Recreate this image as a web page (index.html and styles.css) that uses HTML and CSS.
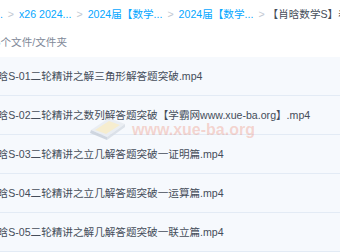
FILE: index.html
```html
<!DOCTYPE html>
<html lang="zh-CN">
<head>
  <meta charset="UTF-8">
  <title>文件列表</title>
  <link rel="stylesheet" href="styles.css">
</head>
<body>
  <div class="page">
    <div class="crumbs">
      <span class="crumb crumb-cut">...</span>
      <span class="sep">&gt;</span>
      <span class="crumb">x26 2024...</span>
      <span class="sep">&gt;</span>
      <span class="crumb">2024届【数学...</span>
      <span class="sep">&gt;</span>
      <span class="crumb">2024届【数学...</span>
      <span class="sep">&gt;</span>
      <span class="crumb crumb-now">【肖晗数学S】春季班</span>
    </div>

    <div class="count">共5个文件/文件夹</div>

    <div class="file-list">
      <div class="file-row"><span class="file-name">肖晗S-01二轮精讲之解三角形解答题突破.mp4</span></div>
      <div class="file-row"><span class="file-name">肖晗S-02二轮精讲之数列解答题突破【学霸网www.xue-ba.org】.mp4</span></div>
      <div class="file-row"><span class="file-name">肖晗S-03二轮精讲之立几解答题突破一证明篇.mp4</span></div>
      <div class="file-row"><span class="file-name">肖晗S-04二轮精讲之立几解答题突破一运算篇.mp4</span></div>
      <div class="file-row"><span class="file-name">肖晗S-05二轮精讲之解几解答题突破一联立篇.mp4</span></div>
    </div>

    <div class="watermark">
      <svg class="wm-logo" width="40" height="24" viewBox="0 0 40 24">
        <polygon points="4,14 22,2 38,8 20,21" fill="#e9edf2"/>
        <polygon points="4,14 20,21 20,24 3,17" fill="#c9d1db"/>
        <polygon points="20,21 38,8 38,11 20,24" fill="#d8dee6"/>
        <polygon points="8,14 22,5 33,9 19,18" fill="#f6ecc8"/>
      </svg>
      <span class="wm-text">www.xue-ba.org</span>
    </div>
  </div>
</body>
</html>
```

FILE: styles.css
```css
body {
  margin: 0;
  background: #fff;
  font-family: "Liberation Sans", "Noto Sans CJK SC", sans-serif;
  font-size: 10.6px;
  overflow: hidden;
}

.page {
  position: relative;
  width: 340px;
  height: 252px;
  overflow: hidden;
}

.crumbs {
  display: flex;
  white-space: nowrap;
  padding-top: 4px;
  height: 20px;
  line-height: 20px;
}

.crumb {
  color: #06a7ff;
}

.crumb-cut {
  margin-left: -6px;
}

.crumb-now {
  color: #454d5a;
  margin-left: -2px;
}

.sep {
  color: #c2c8d2;
  margin: 0 5px;
}

.count {
  margin-top: 8px;
  margin-left: -16px;
  line-height: 20px;
  color: #818999;
  white-space: nowrap;
}

.file-list {
  margin-top: 5px;
}

.file-row {
  height: 38px;
  line-height: 38px;
  background: #f6f9fd;
  border-bottom: 1px solid #e3ebf5;
  white-space: nowrap;
}

.file-name {
  display: inline-block;
  margin-left: -13px;
  color: #454d5a;
}

.watermark {
  position: absolute;
  left: 87px;
  top: 116px;
  display: flex;
  align-items: flex-end;
  gap: 5px;
  opacity: 0.85;
  pointer-events: none;
}

.wm-text {
  font-family: "Liberation Sans", sans-serif;
  font-weight: bold;
  font-size: 16px;
  line-height: 20px;
  color: rgba(238, 112, 84, 0.32);
}
```
